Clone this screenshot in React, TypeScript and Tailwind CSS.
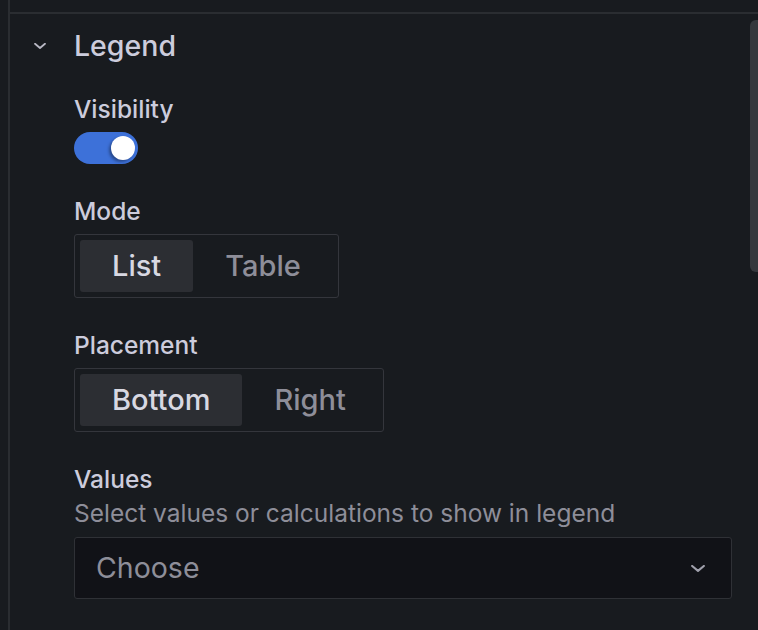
import React, { useState } from "react";

const Chevron = ({ className }: { className?: string }) => (
  <svg viewBox="0 0 12 6" className={className} fill="none">
    <polyline points="1,0.8 6,5 11,0.8" stroke="currentColor" strokeWidth="1.8" strokeLinecap="round" strokeLinejoin="round" />
  </svg>
);

const Label = ({ children }: { children: React.ReactNode }) => (
  <div className="text-[24.5px] leading-[30px] font-medium text-[#ccccdc]">{children}</div>
);

const RadioGroup = ({ options, value, onChange }: { options: string[]; value: string; onChange: (v: string) => void }) => (
  <div className="inline-flex p-[5px] border border-[#34363c] rounded-[3px]">
    {options.map((o) => (
      <button
        key={o}
        onClick={() => onChange(o)}
        className={
          o === value
            ? "h-[52px] px-8 rounded-[3px] bg-[#2c2e33] text-[29px] font-medium text-[#d8d8e2]"
            : "h-[52px] px-8 rounded-[3px] text-[29px] font-medium text-[#8e8e99]"
        }
      >
        {o}
      </button>
    ))}
  </div>
);

const App = () => {
  const [visible, setVisible] = useState(true);
  const [mode, setMode] = useState("List");
  const [placement, setPlacement] = useState("Bottom");

  return (
    <div className="w-[758px] h-[630px] bg-[#181b1f] flex overflow-hidden font-['Inter',sans-serif]">
      <div className="w-2 shrink-0" />
      <div className="flex-1 border-l-2 border-[#2a2d31] relative">
        <div className="h-[14px] border-b-2 border-[#2a2d31]" />
        {/* scrollbar */}
        <div className="absolute right-0 top-[20px] w-[8px] h-[252px] rounded-l-[6px] bg-[#35383d]" />

        <div className="pl-6 pt-4">
          <div className="flex items-center h-8">
            <Chevron className="w-3 h-[6px] text-[#b8b8c4]" />
            <span className="ml-7 text-[28.5px] font-medium text-[#ccccdc]">Legend</span>
          </div>

          <div className="pl-10">
            <div className="mt-[32px]">
              <Label>Visibility</Label>
            </div>
            <button
              onClick={() => setVisible(!visible)}
              className={
                visible
                  ? "mt-2 w-16 h-8 rounded-full bg-[#3d71d9] flex items-center justify-end pr-[3px]"
                  : "mt-2 w-16 h-8 rounded-full bg-[#2c2e33] flex items-center justify-start pl-[3px]"
              }
            >
              <span className="w-6 h-6 rounded-full bg-white shadow-[-2px_2px_3px_rgba(0,0,0,0.35)]" />
            </button>

            <div className="mt-[32px]">
              <Label>Mode</Label>
            </div>
            <div className="mt-2">
              <RadioGroup options={["List", "Table"]} value={mode} onChange={setMode} />
            </div>

            <div className="mt-[32px]">
              <Label>Placement</Label>
            </div>
            <div className="mt-2">
              <RadioGroup options={["Bottom", "Right"]} value={placement} onChange={setPlacement} />
            </div>

            <div className="mt-[32px]">
              <Label>Values</Label>
            </div>
            <div className="mt-1 text-[24.5px] leading-[30px] text-[#8e8e99]">
              Select values or calculations to show in legend
            </div>
            <div className="mt-[9px] w-[658px] h-[62px] bg-[#111217] border border-[#2f3136] rounded-[3px] flex items-center pl-[21px] pr-[26px]">
              <span className="flex-1 text-[28.5px] text-[#8e8e99]">Choose</span>
              <Chevron className="w-[14px] h-[7px] text-[#a0a0ac]" />
            </div>
          </div>
        </div>
      </div>
    </div>
  );
};

export default App;
